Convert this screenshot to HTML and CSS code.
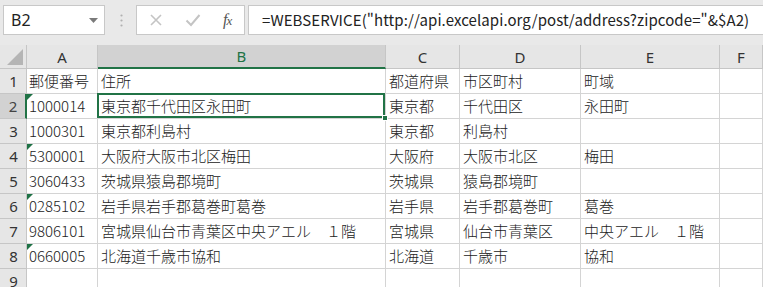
FILE: index.html
```html
<!DOCTYPE html>
<html lang="ja">
<head>
<meta charset="utf-8">
<link rel="stylesheet" href="styles.css">
</head>
<body>
<div class="app">
  <div class="toolbar">
    <div class="namebox">
      <span class="nb-text">B2</span>
      <svg class="caret" width="9" height="5" viewBox="0 0 9 5"><path d="M0 0H9L4.5 5Z" fill="#7a7a7a"/></svg>
    </div>
    <div class="grip">
      <svg width="3" height="13" viewBox="0 0 3 13"><circle cx="1.5" cy="1.5" r="1.1" fill="#b0b0b0"/><circle cx="1.5" cy="6.5" r="1.1" fill="#b0b0b0"/><circle cx="1.5" cy="11.5" r="1.1" fill="#b0b0b0"/></svg>
    </div>
    <div class="fxbox">
      <svg class="ico" width="14" height="14" viewBox="0 0 14 14"><path d="M2 2L12 12M12 2L2 12" stroke="#c4c4c4" stroke-width="1.6" fill="none"/></svg>
      <svg class="ico" width="16" height="14" viewBox="0 0 16 14"><path d="M1.5 7.5L6 12L14.5 2" stroke="#c4c4c4" stroke-width="2" fill="none"/></svg>
      <span class="fx">f<span class="fx-x">x</span></span>
    </div>
    <div class="formula">=WEBSERVICE("http://api.excelapi.org/post/address?zipcode="&amp;$A2)</div>
  </div>

  <div class="sheet">
    <div class="corner"><span class="corner-tri"></span></div>
    <div class="ch">A</div>
    <div class="ch sel">B</div>
    <div class="ch">C</div>
    <div class="ch">D</div>
    <div class="ch">E</div>
    <div class="ch">F</div>

    <div class="rh">1</div>
    <div class="c num">郵便番号</div>
    <div class="c">住所</div>
    <div class="c">都道府県</div>
    <div class="c">市区町村</div>
    <div class="c">町域</div>
    <div class="c"></div>

    <div class="rh sel">2</div>
    <div class="c num tri">1000014</div>
    <div class="c active">東京都千代田区永田町<span class="selbox"><span class="handle"></span></span></div>
    <div class="c">東京都</div>
    <div class="c">千代田区</div>
    <div class="c">永田町</div>
    <div class="c"></div>

    <div class="rh">3</div>
    <div class="c num">1000301</div>
    <div class="c">東京都利島村</div>
    <div class="c">東京都</div>
    <div class="c">利島村</div>
    <div class="c"></div>
    <div class="c"></div>

    <div class="rh">4</div>
    <div class="c num tri">5300001</div>
    <div class="c">大阪府大阪市北区梅田</div>
    <div class="c">大阪府</div>
    <div class="c">大阪市北区</div>
    <div class="c">梅田</div>
    <div class="c"></div>

    <div class="rh">5</div>
    <div class="c num">3060433</div>
    <div class="c">茨城県猿島郡境町</div>
    <div class="c">茨城県</div>
    <div class="c">猿島郡境町</div>
    <div class="c"></div>
    <div class="c"></div>

    <div class="rh">6</div>
    <div class="c num tri">0285102</div>
    <div class="c">岩手県岩手郡葛巻町葛巻</div>
    <div class="c">岩手県</div>
    <div class="c">岩手郡葛巻町</div>
    <div class="c">葛巻</div>
    <div class="c"></div>

    <div class="rh">7</div>
    <div class="c num">9806101</div>
    <div class="c">宮城県仙台市青葉区中央アエル　１階</div>
    <div class="c">宮城県</div>
    <div class="c">仙台市青葉区</div>
    <div class="c">中央アエル　１階</div>
    <div class="c"></div>

    <div class="rh">8</div>
    <div class="c num tri">0660005</div>
    <div class="c">北海道千歳市協和</div>
    <div class="c">北海道</div>
    <div class="c">千歳市</div>
    <div class="c">協和</div>
    <div class="c"></div>

    <div class="rh">9</div>
    <div class="c"></div>
    <div class="c"></div>
    <div class="c"></div>
    <div class="c"></div>
    <div class="c"></div>
    <div class="c"></div>
  </div>
</div>
</body>
</html>
```

FILE: styles.css
```css
* { box-sizing: border-box; }
html, body { margin: 0; padding: 0; }
body {
  width: 763px;
  height: 287px;
  overflow: hidden;
  background: #ffffff;
  font-family: "Noto Sans CJK JP", "Noto Sans", sans-serif;
}
.app { width: 763px; }

.toolbar {
  display: flex;
  align-items: flex-start;
  height: 45px;
  padding: 5px 0 0 3px;
  background: #e9e9e9;
}
.namebox {
  width: 102px;
  height: 30px;
  background: #fff;
  border: 1px solid #c8c8c8;
  display: flex;
  align-items: center;
  justify-content: space-between;
  padding: 0 6px 0 7px;
}
.nb-text { font-family: "Noto Sans", sans-serif; font-size: 16px; color: #222; }
.caret { margin-top: 1px; }
.grip {
  width: 31px;
  height: 30px;
  display: flex;
  align-items: center;
  justify-content: center;
  padding-left: 2px;
}
.fxbox {
  width: 109px;
  height: 30px;
  background: #fff;
  border: 1px solid #c8c8c8;
  display: flex;
  align-items: center;
  padding: 0 0 0 12px;
  gap: 22px;
}
.ico { display: block; }
.fx {
  font-family: "Liberation Serif", serif;
  font-style: italic;
  font-size: 16px;
  color: #555;
  letter-spacing: -1px;
}
.fx-x { font-size: 13px; }
.formula {
  flex: 1;
  margin-left: 3px;
  height: 30px;
  background: #fff;
  border: 1px solid #c8c8c8;
  border-right: none;
  padding-left: 13px;
  font-family: "Noto Sans CJK JP", sans-serif;
  font-size: 15px;
  letter-spacing: 0.08px;
  line-height: 28px;
  color: #222;
  white-space: nowrap;
  overflow: hidden;
}

.sheet {
  display: grid;
  grid-template-columns: 27px 71px 288px 74px 121px 139px 43px;
  grid-template-rows: 24px repeat(9, 25px);
}
.corner {
  background: #e6e6e6;
  border-right: 1px solid #c6c6c6;
  border-bottom: 1px solid #c6c6c6;
  position: relative;
}
.corner-tri {
  position: absolute;
  right: 3px;
  bottom: 3px;
  width: 0;
  height: 0;
  border-left: 16px solid transparent;
  border-bottom: 16px solid #b5b5b5;
}
.ch {
  background: #e6e6e6;
  border-right: 1px solid #c6c6c6;
  border-bottom: 1px solid #c6c6c6;
  font-family: "Noto Sans", sans-serif;
  font-size: 15px;
  color: #333;
  display: flex;
  align-items: center;
  justify-content: center;
  line-height: 1;
  padding-top: 1px;
}
.ch.sel {
  background: #d2d2d2;
  color: #217346;
  border-bottom: 2px solid #217346;
}
.rh {
  background: #e6e6e6;
  border-right: 1px solid #c6c6c6;
  border-bottom: 1px solid #c6c6c6;
  font-family: "Noto Sans", sans-serif;
  font-size: 15px;
  color: #333;
  display: flex;
  align-items: center;
  justify-content: center;
  padding-left: 1px;
}
.rh.sel {
  background: #d2d2d2;
  color: #444;
  border-right: 2px solid #217346;
}
.c {
  border-right: 1px solid #d4d4d4;
  border-bottom: 1px solid #d4d4d4;
  font-size: 15px;
  color: #222;
  white-space: nowrap;
  padding-left: 3px;
  line-height: 24px;
  position: relative;
  font-weight: 300;
}
.c.num { padding-left: 2px; }
.c.tri::before {
  content: "";
  position: absolute;
  left: 0;
  top: 0;
  width: 0;
  height: 0;
  border-top: 6px solid #1e7145;
  border-right: 6px solid transparent;
}
.selbox {
  position: absolute;
  left: -1px;
  top: -1px;
  right: 0;
  bottom: 0;
  border: 2px solid #217346;
  z-index: 2;
}
.handle {
  position: absolute;
  right: -5px;
  bottom: -5px;
  width: 6px;
  height: 6px;
  background: #217346;
  border: 1px solid #fff;
}
```
